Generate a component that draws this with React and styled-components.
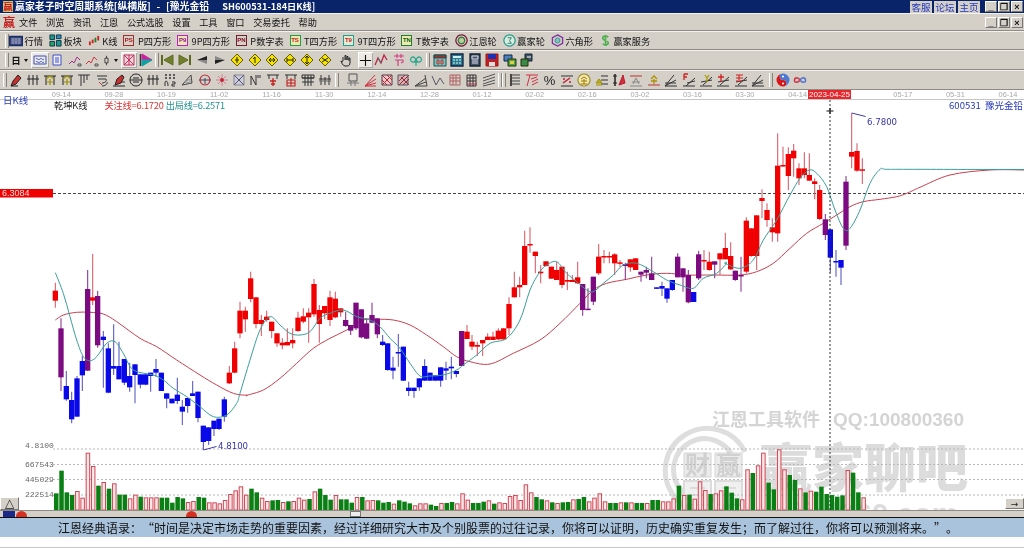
import React from "react";
import styled, { createGlobalStyle } from "styled-components";

const Global = createGlobalStyle`
  html, body { margin: 0; padding: 0; background: #fff; }
  #root { width: 1024px; height: 548px; overflow: hidden; }
`;

const FONT = `"Noto Sans CJK SC", "Liberation Sans", sans-serif`;

const Page = styled.div`
  width: 1024px; height: 548px; overflow: hidden; display: flex; flex-direction: column;
  background: #fff; font-family: ${FONT}; font-size: 9.2px; color: #111; filter: blur(0.3px);
`;
const TitleBar = styled.div`
  height: 13px; flex: none; background: #0a246a; color: #fff; display: flex; align-items: center;
  padding: 0 1px 0 3px; font-weight: 700; line-height: 13px; white-space: pre; font-size: 9.9px;
`;
const AppMark = styled.span`
  width: 10px; height: 11px; margin-right: 2px; background: #d8c070; color: #c81818; font-size: 9.5px; font-weight: 700;
  line-height: 11px; text-align: center; flex: none;
`;
const TitleText = styled.span`flex: 1; word-spacing: 3.5px;`;
const TitleCode = styled.span`margin-left: 13px; font-size: 9.2px;`;
const LinkButton = styled.span`
  width: 22px; height: 12px; margin-left: 2px; background: #d4d0c8; color: #2036c0; line-height: 12px; text-align: center;
  font-size: 9.5px; font-weight: 400; flex: none;
`;
const WinButton = styled.span`
  width: 12px; height: 11px; margin-left: ${p => p.$first ? 5 : 1}px; background: #d4d0c8; color: #111; font: 700 9px/10px "Liberation Sans", sans-serif;
  text-align: center; border: 1px solid; border-color: #fff #777 #777 #fff; box-sizing: border-box; flex: none;
`;
const Bar = styled.div`
  flex: none; height: ${p => p.$h}px; background: #d4d0c8; border-top: 1px solid #f4f2ee; border-bottom: 1px solid #8e8b84;
  box-sizing: border-box; display: flex; align-items: center; padding-left: ${p => p.$pl || 0}px; white-space: nowrap;
`;
const MenuItem = styled.span`margin-right: 8.6px;`;
const MenuMark = styled.span`width: 12px; margin: 0 4px 0 3px; color: #c81818; font-size: 12px; font-weight: 700; line-height: 12px; flex: none;`;
const Grip = styled.span`width: 2px; height: 14px; margin: 0 ${p => p.$mr ?? 2}px 0 ${p => p.$ml ?? 0}px; border-left: 1px solid #fff; border-right: 1px solid #85827b; flex: none;`;
const Spacer = styled.span`flex: ${p => p.$fix ? "0 0 1px" : "1"};`;
const Tool = styled.span`display: inline-flex; align-items: center; gap: ${p => p.$tag ? 3.5 : 1.5}px; margin-right: ${p => p.$tag ? 5.8 : 6}px; flex: none;`;
const TagIcon = styled.span`
  width: 11px; height: 11px; box-sizing: border-box; border: 1px solid ${p => p.$c}; background: ${p => p.$bg}; color: ${p => p.$t};
  font: 700 6px/9px "Liberation Sans", sans-serif; text-align: center; flex: none;
`;
const Slot = styled.span`
  width: ${p => p.$w || 17.5}px; height: 16px; display: inline-flex; align-items: center; justify-content: center; flex: none;
  background: ${p => p.$on ? "#ece9e3" : "transparent"}; box-shadow: ${p => p.$on ? "inset 1px 1px 0 #fff, inset -1px -1px 0 #aaa" : "none"};
`;
const DayLabel = styled.span`font-size: 9.5px; font-weight: 700; width: 10px; margin-left: 1px; text-align: center; flex: none;`;
const Caret = styled.span`width: 0; height: 0; margin: 0 ${p => p.$mr ?? 4}px 0 ${p => p.$ml ?? 3}px; border: 2.5px solid transparent; border-top: 3px solid #111; border-bottom: 0; flex: none;`;
const AxisRow = styled.div`
  flex: none; height: 10px; box-sizing: border-box; border-bottom: 1px solid #c6c6c6; display: flex; padding-left: 35px; background: #fff;
`;
const AxisCell = styled.span`width: 52.6px; flex: none; text-align: center; color: #a8a8a8; font: 7.4px/9px "Liberation Sans", sans-serif;`;
const ChartArea = styled.div`position: relative; flex: none; height: 417px; background: #fff;`;
const ChartSvg = styled.svg`display: block; width: 1024px; height: 410px;`;
const PeriodTag = styled.span`position: absolute; left: 3px; top: -5px; color: #2a3fb4; font-size: 9.5px; line-height: 11px;`;
const Legend = styled.div`position: absolute; left: 54px; top: 0; display: flex; line-height: 11px; font-size: 9.2px; color: #222;`;
const LegendItem = styled.span`color: ${p => p.$c}; margin-left: ${p => p.$ml}px; letter-spacing: -0.15px;`;
const Stock = styled.span`position: absolute; right: 1px; top: 0; color: #2438b8; font-size: 9.5px; line-height: 11px; white-space: pre;`;
const DateTag = styled.span`
  position: absolute; left: 808px; top: -10px; width: 43px; height: 9px; background: #e8262c; color: #fff;
  font: 8px/9px "Liberation Sans", sans-serif; text-align: center;
`;
const SmallButton = styled.span`
  position: absolute; top: ${p => p.$top}px; ${p => p.$right ? "right: 0;" : "left: 0;"} width: 19px; height: ${p => p.$right ? 11 : 13}px; box-sizing: border-box;
  background: #d4d0c8; border: 1px solid; border-color: #fff #777 #777 #fff; color: #222; font: ${p => p.$right ? 9 : 12}px/10px "DejaVu Sans", sans-serif; text-align: center;
`;
const Strip = styled.div`
  position: relative; height: 7px; background: #d4d0c8; border-top: 1px solid #8e8b84; box-sizing: border-box; display: flex; align-items: flex-start; overflow: hidden; padding-left: 3px;
`;
const StripBlue = styled.span`width: 12px; height: 6px; background: #1b2a8a; flex: none;`;
const StripDot = styled.span`width: 11px; height: 11px; border-radius: 50%; background: #d83020; margin-left: ${p => p.$ml}px; flex: none;`;
const StripThumb = styled.span`width: 11px; height: 6px; border: 1px solid #777; background: #eee; box-sizing: border-box; margin-left: ${p => p.$ml}px; flex: none;`;
const Footer = styled.div`
  flex: none; height: 20px; box-sizing: border-box; border-top: 1px solid #111; background: #a9c3dc; color: #111; font-size: 12px; line-height: 19px; padding-left: 58px; white-space: nowrap;
`;
const Quote = styled.span`display: inline-block; width: 12px; text-align: ${p => p.$a};`;
const Bottom = styled.div`flex: 1; border-bottom: 1px solid #c8c8c8; background: #fff;`;

const I = ({ a, s = 14 }) => (
  <svg width={s} height={s} viewBox="0 0 14 14" style={{ display: "block" }}>
    {a.map((p, i) => <path key={i} d={p[0]} stroke={p[1] || "none"} fill={p[2] || "none"} strokeWidth={p[3] || 1} />)}
  </svg>
);

const D = (inner, c = "#222") => [["M7 1l6 6-6 6-6-6z", "#6a5a00", "#f4e400"], [inner, c]];
const ic = {
  market: [["M0.5 2.5h13v9H.5z", "#1c2c66", "#39477e", 1.4], ["M2 5h10M2 7h10M2 9h10M4 4v6M7 4v6M10 4v6", "#b0b6c8", null, .7]],
  block: [["M1 1h5v5H1z", "#134", "#1b9a8a"], ["M8 1h5v4H8z", "#134", "#2a8cc0"], ["M1 8h5v5H1z", "#134", "#24a06a"], ["M8 7h5v6H8z", "#134", "#1b9a8a"]],
  kline: [["M2 8v4", "#d02020", null, 2], ["M5 6v4", "#d02020", null, 2], ["M8 4v5", "#208030", null, 2], ["M11 2v5", "#d02020", null, 2]],
  gann: [["M7 1a6 6 0 1 0 .01 0z", "#7a1a3a", null, 1.4], ["M7 3.5a3.5 3.5 0 1 0 .01 0z", "#3a7a3a", "#bcd0a0", 1.4]],
  win: [["M7 1a6 6 0 1 0 .01 0z", "#30a090", "#dcebe0", 1.4], ["M5 4h4l-2 3 2 3H5", "#208070"]],
  hex: [["M7 1l5.5 3v6L7 13l-5.5-3V4z", "#8030a0", null, 1.4], ["M7 4l2.5 1.5v3L7 10 4.500 8.500v-3z", "#30908a", "#80c0c0"]],
  dollar: [["M10 3.500C8 1.500 4 2 4 4.500S10 7 10 9.500 6 12.500 4 10.500M7 1v12", "#50b050", null, 1.8]],
  wave: [["M1 3h12v8H1z", "#3a4ec0"], ["M3 6c1-2 2 2 4 0s2 2 4 0M3 9c1-2 2 2 4 0s2 2 4 0", "#3a4ec0"]],
  note: [["M3 2h8v10H3z", "#4050c0", "#eef"], ["M5 5h4M5 7h4M5 9h4", "#4050c0"]],
  zigA: [["M1 11l3-3 2 2 3-6 3 3", "#a03090"], ["M10 11h3v2h-3z", "#555"]],
  zigB: [["M1 11l3-3 2 2 3-6 3 3", "#d03040"], ["M10 11h3v2h-3z", "#555"]],
  candle: [["M7 1v3M5 4h4v6H5zM7 10v3", "#222"]],
  cross: [["M2 2h10v10H2z", "#c03060", "#f2d8d8"], ["M2 2l10 10M12 2L2 12M7 2v10", "#c03060"]],
  flag: [["M1.500 1v12", "#333", null, 1.5], ["M3 1l10 6H3z", "#d020a0", "#d020a0"], ["M3 7h10L3 13z", "#10a0a0", "#10a0a0"]],
  first: [["M2 2v10", "#5c6a20", null, 2], ["M13 2v10L4 7z", "#5c6a20", "#70802c"]],
  last: [["M12 2v10", "#5c6a20", null, 2], ["M1 2v10l9-5z", "#5c6a20", "#70802c"]],
  back: [["M2 7l10-4v4z", null, "#222"], ["M2 7l10 4V7z", null, "#888"]],
  fwd: [["M12 7L2 3v4z", null, "#888"], ["M12 7L2 11V7z", null, "#222"]],
  d1: D("M7 4v6M5 7h4"), d2: D("M7 4v6M7 4L5 6"), d3: D("M4 7h6M4 7l2-2M10 7L8 5M4 7l2 2M10 7L8 9"),
  d4: D("M4 5v4M10 5v4M4 7h6"), d5: D("M7 3.500v7M5 5l2-2 2 2M5 9l2 2 2-2"), d6: D("M4 5l6 4M10 5L4 9"),
  hand: [["M4 8V4M6 7V2.500h1V7M8 7V3.500h1V7M10 8V5h1v4c0 3-1 4-3 4H6c-2 0-4-4-4-5l2 1", "#222"]],
  plus: [["M7 1v12M1 7h12", "#111", null, 1.2]],
  vee: [["M1 12l3-7 3 5 3-8 3 5", "#c02040", null, 1.3], ["M4 5l3 5", "#208080"]],
  jie: [["M2 3h10M5 1v4M9 1v4M3 7h8v2l-2 1M6 7v6", "#d04080", null, 1.2]],
  lu: [["M4 4a2.500 2.500 0 1 0 .01 0zM10 4a2.500 2.500 0 1 0 .01 0zM4 9h7M7 8v5", "#30a890", null, 1.3]],
  cal: [["M1 2h12v11H1z", "#155", "#7fc0c0"], ["M1 2h12v3H1z", "#155", "#a03030"], ["M4 7h2v4H4zM8 7h2v4H8z", "#c03030"]],
  calc: [["M1 1h12v12H1z", "#124", "#2a7a90", 1.3], ["M3 3h8v2H3z", null, "#d0f0f0"], ["M3 7h2M6 7h2M9 7h2M3 10h2M6 10h2M9 10h2", "#dff"]],
  book: [["M2 1h10v12H2z", "#123", "#456", 1.3], ["M4 3h6v3H4zM4 8h6M4 10h6", "#dde"]],
  disk: [["M1 1h12v12H1z", "#a01818", "#c02020"], ["M3 1h8v5H3z", null, "#2030b0"], ["M4 9h6v4H4z", null, "#ddd"]],
  netA: [["M1 2h8v6H1z", "#124", "#4a80c0"], ["M5 6h8v7H5z", "#230", "#50a050"], ["M7 8h4v3H7z", null, "#e0d040"]],
  netB: [["M5 1h7v7H5z", "#123", "#456"], ["M1 6h7v7H1z", "#230", "#3a8a4a"], ["M7 4h4", "#fff"]],
  pen: [["M2 13l2-5 5-6 3 3-5 6z", "#222", "#c83030"], ["M2 13h7", "#222"]],
  ticks: [["M3 2v10M7 2v10M11 2v10M1 6h12", "#222"]],
  goldT: [["M1 3h12M3 3v9M11 3v9", "#222"], ["M3 6l4-3 4 3M4 9h6M7 6v6", "#a09000", null, 1.2]],
  fork: [["M1 2h12M4 2v11M7 2v8M10 2v5", "#333"]],
  swirl: [["M2 3h10M3 6h8c1 2-1 4-4 4M7 13c3 0 6-2 5-4", "#333"], ["M4 9l3 3", "#c03030"]],
  penRed: [["M3 12l2-6 5-4 2 2-3 6z", "#222", "#c83030"], ["M1 13h12", "#222"], ["M9 9h4", "#333"]],
  circ: [["M7 1a6 6 0 1 0 .01 0z", "#222"], ["M1 7h12M4 5h6M4 9h6", "#222"]],
  n2: [["M2 2h2M6 2h2M10 2h2M2 5h2M6 5h2M10 5h2", "#333", null, 1.3], ["M2 13V9c2-2 3 0 3 4M9 9h3v2H9v2h3", "#333"]],
  tri: [["M2 12l9-10 1 8z", "#444"], ["M5 9l5-3v4z", "#999"]],
  redCirc: [["M7 2a5 5 0 1 0 .01 0z", "#c03040", null, 1.2], ["M1 7h12M7 5v6", "#445"]],
  redStar: [["M7 1v12M1 7h12M3 3l8 8M11 3l-8 8", "#d08090"], ["M5 7h4M7 5v4", "#c02030", null, 1.6]],
  boxX: [["M2 2h10v10H2z", "#889", "#ccd"], ["M2 2l10 10M12 2L2 12", "#556"]],
  nn: [["M2 12V3l5 9V2", "#333"], ["M9 2v3M11 2v3", "#333"]],
  redT: [["M1 2h12M3 2v4M11 2v4", "#333"], ["M7 5v8M4 8h6M5 11h4", "#c02020", null, 1.3]],
  redTB: [["M1 2h12M3 2v4M11 2v4", "#333"], ["M3 7h8v6H3zM3 10h8M7 5v8", "#c02020", null, 1.1]],
  gridB: [["M1 2h12v3H1zM1 5h12M4 2v11M7 2v11M10 2v11M1 9h12", "#333"]],
  gridH: [["M3 2v10M7 4v8M11 2v10M1 6h12", "#333"], ["M1 8h12", "#666"]],
  sq: [["M3 1h8v7H3z", "#555"], ["M1 10h12M5 8v5M9 8v5", "#777"]],
  fanR: [["M2 13L12 2M2 13L13 6M2 13L13 10M2 13h11", "#d03040"]],
  boxR: [["M2 2h10v10H2z", "#445", "#f0c8c8"], ["M2 12L12 2M2 2l10 10M2 7l5 5M7 2l5 5", "#c02030"]],
  boxH: [["M1 2h10v10H1z", "#556", "#d8b0b0"], ["M2 12L12 2M2 8l6-6M6 12l6-6M4 4l8 8", "#903040"]],
  ang: [["M1 13h12L11 2M1 13L12 5M1 13L12 9", "#444"]],
  vv: [["M1 3l4 9 4-7 4 6", "#556"]],
  gridR: [["M2 2h10v10H2zM5 2v10M8 2v10M2 5h10M2 8h10", "#b06060"]],
  gridD: [["M2 2h9v11H2zM5 2v11M8 2v11M2 5h9M2 8h9", "#333"], ["M2 11h10", "#c03050"]],
  lines: [["M1 5l12-4M1 8l12-4M1 11l12-4M1 13l12-3", "#555"]],
  eqL: [["M3 1v12", "#222", null, 1.6], ["M3 2h9M3 5h9M3 8h9M3 11h9", "#444"]],
  fanQ: [["M1 2h12M5 2l-3 11", "#d03040"], ["M6 6l6-2M7 9l6-3M7 12l6-3", "#d03040"]],
  redPct: [["M1 3h12M1 13h12", "#333"], ["M3 10l7-5M3 6h2M9 9h2", "#c02030", null, 1.5]],
  coin: [["M7 1a6 6 0 1 0 .01 0z", "#a09030", "#f0e8b0", 1.2], ["M4 6l3-2 3 2M4 8h6M7 6v5M4 11h6", "#a07a00"]],
  goldL: [["M6 3h7M6 7h7M6 11h7", "#333"], ["M1 10l3-4 3 4zM1 12h6", "#a09000", "#c0b020"]],
  redArrow: [["M3 1v12", "#222", null, 1.5], ["M1 3h4M1 10h4", "#222"], ["M7 12l4-10 2 8z", "#c01830", "#d03040"]],
  stA: [["M1 3h12", "#c03030"], ["M4 11l3-6 3 6M3 9h8M1 13h12", "#888"]],
  stG: [["M1 12h12", "#c03030"], ["M4 6l3-3 3 3M4 8h6M7 6v5", "#b09000", null, 1.3]],
  ang2: [["M1 13h12M1 13L10 2M1 13l11-6M1 10h11", "#333"]],
  angF: [["M1 13h12M4 13l9-8M5 10l8-2", "#333"], ["M2 1v6M2 1h4M2 4h3", "#d02020", null, 1.3]],
  angG: [["M1 13h12M4 12l9-8M2 9l11-2", "#333"], ["M6 2l2 3 2-3M8 5v4", "#b0a000", null, 1.3]],
  angT: [["M1 13h12M4 12l9-8M2 9l11-2", "#333"], ["M2 4h6M5 1v8", "#d02020", null, 1.3]],
  angS: [["M1 13h12M4 12l9-8M2 9l11-2", "#333"], ["M2 2h7M2 5h7M5 2v5M2 8h6", "#d02020", null, 1.1]],
  yy: [["M7 0.500a6.500 6.500 0 0 0 0 13a3.250 3.250 0 0 0 0-6.500a3.250 3.250 0 0 1 0-6.500z", null, "#d81818"], ["M7 .5a6.500 6.500 0 0 1 0 13a3.250 3.250 0 0 0 0-6.500a3.250 3.250 0 0 1 0-6.500z", null, "#5078d0"], ["M6.500 3h1v1h-1zM6.500 10h1v1h-1z", "#fff"]],
  inf: [["M7 7C5 4 2 4 1.500 7S5 10 7 7", "#d03040", null, 1.5], ["M7 7c2-3 5-3 5.500 0S9 10 7 7", "#5070d0", null, 1.5]],
};

const tools1a = [
  [<I a={ic.market} />, "行情"], [<I a={ic.block} s={13} />, "板块"], [<I a={ic.kline} s={13} />, "K线"],
  [<TagIcon $c="#a03030" $bg="#d8d0c8" $t="#a01818">PS</TagIcon>, "P四方形", 1],
  [<TagIcon $c="#c020c0" $bg="#ece8b0" $t="#901090">P9</TagIcon>, "9P四方形", 1],
  [<TagIcon $c="#702030" $bg="#d8d0c8" $t="#801020">PN</TagIcon>, "P数字表", 1],
  [<TagIcon $c="#20a040" $bg="#ece8b0" $t="#c02020">TS</TagIcon>, "T四方形", 1],
  [<TagIcon $c="#20a090" $bg="#e8e8d0" $t="#c02020">T9</TagIcon>, "9T四方形", 1],
  [<TagIcon $c="#208030" $bg="#ece8b0" $t="#106010">TN</TagIcon>, "T数字表", 1],
  [<I a={ic.gann} s={13} />, "江恩轮"], [<I a={ic.win} s={13} />, "赢家轮"], [<I a={ic.hex} s={13} />, "六角形"], [<I a={ic.dollar} s={13} />, "赢家服务"],
];

const row2a = ["wave", "note", "zigA", "zigB"];
const row2b = ["first", "last", "back", "fwd", "d1", "d2", "d3", "d4", "d5", "d6"];
const row2c = ["cal", "calc", "book", "disk", "netA", "netB"];
const row3a = ["pen", "ticks", "goldT", "goldT", "fork", "swirl", "penRed", "circ", "ticks", "n2", "tri", "redCirc", "redStar", "boxX", "nn", "redT", "redTB", "gridB", "gridH"];
const row3b = ["sq", "fanR", "boxR", "boxH", "ang", "vv", "gridR", "gridD", "lines"];
const row3c = ["eqL", "fanQ", "PCT", "redPct", "coin", "goldL", "redArrow", "stA", "stG", "ang2", "angF", "angG", "angT", "angS", "ang2"];
const Pct = styled.span`font: 13px "Liberation Sans", sans-serif; color: #222;`;

const seg = (ox, oy, rows) => rows.map(([px, t, b, h, l, k]) => ({ x: ox + px / 3, t: oy + t / 3, b: oy + b / 3, h: oy + h / 3, l: oy + l / 3, k }));

const candles = [
  ...seg(0, 260, [
    [166,92,122,68,143,"r"],[183,205,352,175,393,"p"],[199,378,418,333,422,"b"],[215,420,478,395,490,"b"],[231,355,470,348,470,"b"],[247,303,346,288,393,"b"],
    [263,87,332,30,332,"p"],[278,112,122,-18,135,"r"],[293,108,256,93,263,"p"],[310,230,240,213,383,"b"],[325,265,398,250,400,"b"],[341,318,326,193,345,"b"],
    [357,318,358,245,358,"b"],[373,297,368,297,375,"b"],[389,348,382,308,395,"b"],[405,313,345,313,430,"b"],[421,343,374,343,385,"b"],[437,343,374,343,376,"b"],
    [452,338,348,338,395,"b"],[468,327,338,297,350,"b"],[484,338,393,338,393,"b"],[500,400,416,400,445,"b"],[516,416,430,416,430,"b"],[532,404,423,353,432,"b"],
    [547,440,455,420,495,"b"],[563,414,438,414,458,"b"],[578,400,408,363,408,"b"],[594,395,474,395,487,"b"],[610,497,546,497,570,"b"],[626,502,543,502,555,"b"],
    [642,482,507,482,528,"b"],[657,476,507,476,510,"b"],[673,418,470,410,485,"b"],[688,338,370,318,372,"r"],
  ]),
  ...seg(230, 220, [
    [14,385,458,365,460,"r"],[30,272,340,245,355,"r"],[46,272,298,260,335,"r"],[62,175,237,155,247,"r"],[78,232,312,232,325,"r"],[94,300,312,285,348,"r"],
    [110,290,300,272,305,"r"],[125,305,333,305,355,"r"],[141,340,370,340,380,"r"],[157,368,376,355,388,"r"],[172,366,376,325,376,"r"],[188,360,370,325,385,"r"],
    [204,293,333,275,335,"r"],[220,289,305,265,310,"r"],[236,278,292,265,368,"r"],[252,192,283,177,290,"r"],[268,270,312,255,368,"r"],[284,258,280,258,298,"r"],
    [300,232,300,212,318,"r"],[316,236,292,215,295,"r"],[332,265,277,265,290,"r"],[347,300,318,275,320,"p"],[362,315,332,315,345,"p"],[378,248,325,248,330,"p"],
    [394,268,352,268,355,"p"],[410,310,356,295,356,"p"],[426,285,308,248,310,"p"],[442,295,343,295,355,"p"],[458,365,375,345,378,"b"],[473,370,450,370,452,"b"],
    [489,443,452,410,478,"b"],[505,396,400,342,440,"b"],[520,380,482,380,483,"b"],[536,503,513,485,528,"b"],[552,503,513,503,533,"b"],[568,475,502,475,512,"b"],
    [584,438,482,418,482,"b"],[600,458,482,458,482,"b"],[616,466,482,466,482,"b"],[632,442,482,442,500,"b"],[648,445,452,425,480,"b"],[664,440,445,410,478,"b"],
    [679,453,462,453,472,"b"],[695,333,438,333,438,"p"],[711,335,357,315,357,"r"],[726,365,380,345,390,"r"],[742,375,380,365,408,"r"],[758,360,370,360,408,"r"],
  ]),
  ...seg(480, 220, [
    [23,350,360,340,360,"r"],[39,350,360,335,360,"r"],[55,332,358,325,360,"r"],[71,325,358,325,360,"r"],[87,252,325,232,345,"r"],[103,202,232,155,232,"r"],
    [119,195,202,170,232,"r"],[134,78,195,32,195,"r"],[150,72,76,22,98,"r"],[166,95,108,95,160,"r"],[182,155,160,135,190,"r"],[198,124,138,124,140,"r"],
    [214,140,176,140,176,"r"],[230,150,180,125,180,"r"],[246,140,195,140,205,"r"],[262,180,185,155,210,"r"],[277,180,186,165,186,"r"],[293,172,190,125,192,"r"],
    [308,192,270,192,287,"p"],[324,266,268,205,268,"p"],[340,170,245,170,255,"p"],[356,110,160,72,165,"r"],[372,108,112,90,130,"r"],[388,108,112,95,130,"r"],
    [404,103,130,100,165,"r"],[420,127,131,120,140,"r"],[436,132,138,128,180,"p"],[451,118,142,118,155,"r"],[467,115,150,115,150,"r"],[483,155,164,155,185,"p"],
    [499,150,158,140,175,"p"],[515,160,180,110,180,"p"],[530,202,206,202,206,"b"],[546,198,206,185,228,"b"],[561,205,236,205,248,"b"],[577,180,210,180,212,"b"],
    [593,110,172,100,172,"p"],[609,145,172,145,215,"p"],[625,165,247,150,250,"p"],[641,216,246,216,246,"b"],[656,103,175,92,180,"p"],[672,120,124,90,150,"r"],
    [688,125,150,95,152,"r"],[704,124,134,124,175,"p"],[720,100,118,100,165,"r"],[736,84,118,38,118,"r"],
  ]),
  ...seg(720, 110, [
    [32,438,478,397,480,"r"],[46,482,510,482,512,"p"],[63,495,498,440,545,"p"],[79,332,485,322,490,"r"],[94,355,438,355,440,"r"],[110,316,438,316,480,"r"],
    [126,264,273,238,325,"r"],[141,300,330,280,350,"r"],[157,352,367,325,395,"r"],[173,167,370,70,395,"r"],[189,165,168,110,170,"r"],[205,132,198,112,240,"r"],
    [221,122,145,102,200,"r"],[237,175,205,160,225,"r"],[253,175,195,127,205,"r"],[268,195,212,130,212,"r"],[284,214,222,205,268,"r"],[299,240,327,225,330,"r"],
    [316,328,375,312,390,"p"],[331,358,443,358,488,"b"],[348,453,456,420,500,"b"],[363,450,473,450,525,"b"],[378,215,407,198,420,"p"],[395,126,140,10,175,"r"],
    [411,123,182,100,185,"r"],[427,178,180,145,222,"r"],
  ]),
];

const pts = (ox, oy, arr) => arr.map(([a, b]) => [ox + a / 3, oy + b / 3]);
const smooth = p => {
  let d = `M${p[0][0]} ${p[0][1]}`;
  for (let i = 0; i < p.length - 1; i++) {
    const a = p[i - 1] || p[i], b = p[i], c = p[i + 1], e = p[i + 2] || c;
    d += `C${(b[0] + (c[0] - a[0]) / 6).toFixed(1)} ${(b[1] + (c[1] - a[1]) / 6).toFixed(1)} ${(c[0] - (e[0] - b[0]) / 6).toFixed(1)} ${(c[1] - (e[1] - b[1]) / 6).toFixed(1)} ${c[0].toFixed(1)} ${c[1].toFixed(1)}`;
  }
  return d;
};

const slow = smooth([
  ...pts(0, 260, [[166,180],[190,165],[230,157],[270,157],[310,162],[350,185],[420,235],[470,260],[530,300],[600,345],[650,375],[700,400],[740,406]]),
  ...pts(230, 220, [[50,526],[100,510],[150,475],[200,430],[250,385],[300,355],[350,330],[400,300],[440,298],[490,300],[540,315],[590,345],[640,380],[680,410],[720,425],[780,432]]),
  ...pts(480, 220, [[100,400],[180,360],[240,310],[300,250],[340,210],[380,190],[440,178],[500,165],[560,160],[620,165],[700,165]]),
  ...pts(720, 110, [[60,495],[110,485],[160,460],[210,415],[260,370],[310,340],[350,315],[390,290],[430,275],[480,268],[530,260],[560,250],[600,232]]),
  [950,175],[990,170],[1024,170],
]);
const fast = smooth([
  ...pts(0, 260, [[166,38],[190,100],[210,170],[230,240],[250,290],[270,302],[290,290],[320,250],[345,245],[370,280],[400,330],[460,345],[490,360],[520,385],[560,410],[600,440],[640,470],[680,465],[710,430]]),
  ...pts(230, 220, [[30,520],[60,420],[90,330],[120,290],[150,315],[180,340],[210,345],[240,335],[270,295],[300,280],[340,270],[380,290],[420,300],[450,320],[480,355],[510,385],[540,430],[570,468],[600,468],[640,465],[680,450],[700,435],[740,405],[780,370]]),
  ...pts(480, 220, [[80,355],[120,300],[150,210],[180,155],[200,135],[230,125],[260,160],[290,185],[320,210],[340,215],[370,190],[400,165],[430,135],[470,130],[520,155],[560,180],[600,195],[640,205],[670,175],[710,160],[740,130]]),
  ...pts(720, 110, [[15,460],[60,475],[100,450],[130,390],[170,330],[210,255],[240,205],[268,180],[290,190],[320,230],[345,300],[370,355],[390,355],[420,300],[450,220],[480,178],[500,178],[600,178]]),
  [1024,169.5],
]);

const volA = "g190 g122 g187 g195 r183 r203 r68 r108 g167 r156 g176 r160 g194 g194 r205 r194 g200 r202 r202 r202 g203 g203 g218 g201 g205 r216 r213 g201 g203 r217 r217 r220 r210 r192 r181 r169 r194 g176 g187 r203 r213 g211 g210 r216 g214 r213 r203 r209 g207 r184 g176 g195 g209 r195 g208".split(" ");
const volB = "g208 g218 r201 g201 r211 r210 g211 g218 g216 r221 g211 g215 g220 r226 r220 r220 g224 g228 r219 g219 g216 r220 r190 r209 g219 g219 g215 r211 g221 r217 r219 r198 r195 r210 r163 r187 g201 g208 r211 g217 r219 g217 g216 r208 g207 g201 r214 r203 r190 r214 g219 g219 r217 g217 r217 g219 g219 r219 g210 g210 r214 r214 r205 g167".split(" ");
const volC = "r285 g284 r296 r244 r270 g282 r280 r271 g259 g278 g295 r298 r208 g219 r196 r158 g248 g268 r148 r208 g225 g240 r265 g277 r272 g275 g260 g282 g285 g290 g286 r210 g218 g277 r292".split(" ");
const bars = [
  ...volA.map(v => [v[0], 430 + +v.slice(1) / 3]),
  ...volB.map(v => [v[0], 430 + +v.slice(1) / 3]),
  ...volC.map(v => [v[0], 400 + +v.slice(1) / 3]),
];

const COL = { r: "#f00000", b: "#0808e8", p: "#7c0a80" };
const WICK = { r: "#d8606c", b: "#5c5cc4", p: "#8a3c90" };

const Chart = () => (
  <ChartSvg viewBox="0 100 1024 410">
    <g fontFamily={FONT}>
      <text x="712" y="426" fontSize="18" fontWeight="700" fill="#d4d4d4">江恩工具软件</text>
      <text x="833" y="426" fontSize="19" fontWeight="700" fontFamily="Liberation Sans" fill="#d4d4d4">QQ:100800360</text>
      <text x="760" y="487" fontSize="52" fontWeight="900" fill="#dcdcdc">赢家聊吧</text>
      <text x="795" y="524" fontSize="30" fontFamily="Liberation Sans" fontWeight="700" fill="#dcdcdc">jief360.com</text>
      <path d="M745 452a42 42 0 1 0-10 50M734 460a31 31 0 1 0-6 30" fill="none" stroke="#dedede" strokeWidth="5" />
      <path d="M684 453h27v24h-27zM715 453h27v24h-27z" fill="#ececec" stroke="#d4d4d4" />
      <text x="685" y="474" fontSize="25" fontWeight="700" fill="#d0d0d0">财</text>
      <text x="716" y="474" fontSize="25" fontWeight="700" fill="#d0d0d0">赢</text>
      <path d="M684 481h27v24h-27zM715 481h27v24h-27zM690 488h15M690 495h15M722 488h14M722 495h14" fill="#f0f0f0" stroke="#dcdcdc" strokeWidth="2" />
    </g>
    {[449, 464.500, 479.500, 495].map(y => <line key={y} x1="53" x2="1024" y1={y} y2={y} stroke="#b8b8b8" strokeDasharray="2 2" />)}
    <g fontFamily="Liberation Mono, monospace" fontSize="8" fill="#666">
      <text x="25" y="447.500">4.8100</text>
      <text x="25" y="467">667543</text>
      <text x="25" y="482">445029</text>
      <text x="25" y="497">222514</text>
    </g>
    <line x1="53" x2="1024" y1="193.500" y2="193.500" stroke="#444" strokeDasharray="3 2" />
    <rect x="0" y="189" width="53" height="8.500" fill="#f00000" />
    <text x="2" y="196.300" fontFamily="Liberation Sans, sans-serif" fontSize="9" fill="#fbdcdc">6.3084</text>
    {bars.map(([k, y], i) => {
      const x = 54 + i * 5.277;
      return k === "g"
        ? <rect key={i} x={x} y={y} width="4.500" height={510 - y} fill="#0a7f14" />
        : <rect key={i} x={x + .5} y={y + .5} width="3.500" height={509.5 - y} fill="#fde8e8" stroke="#d04858" />;
    })}
    <path d={slow} fill="none" stroke="#c8404e" strokeWidth="1" />
    {candles.map((c, i) => (
      <g key={i}>
        <line x1={c.x} x2={c.x} y1={c.h} y2={c.l} stroke={WICK[c.k]} strokeWidth="1.100" />
        <rect x={c.x - 2.650} y={c.t} width="5.300" height={Math.max(c.b - c.t, 1.500)} fill={COL[c.k]} />
      </g>
    ))}
    <path d={fast} fill="none" stroke="#3a9e9a" strokeWidth="1" />
    <line x1="830" x2="830" y1="100" y2="510" stroke="#333" strokeDasharray="2 2" />
    <path d="M826.500 111h7M830 108v6" stroke="#111" strokeWidth="1.200" />
    <path d="M851.700 113l14 3.500M203.500 450l13-3.500" stroke="#3c3ca8" fill="none" />
    <path d="M203.500 443v7" stroke="#5c5cc4" fill="none" />
    <g fontFamily="DejaVu Sans, sans-serif" fontSize="8.600" fill="#3434a8">
      <text x="867" y="125">6.7800</text>
      <text x="218" y="448.500">4.8100</text>
    </g>
  </ChartSvg>
);

export default function App() {
  return (
    <Page lang="zh-CN">
      <Global />
      <TitleBar>
        <AppMark>赢</AppMark>
        <TitleText>赢家老子时空周期系统[纵横版] - [豫光金铅<TitleCode>SH600531-184日K线]</TitleCode></TitleText>
        <LinkButton>客服</LinkButton><LinkButton>论坛</LinkButton><LinkButton>主页</LinkButton>
        <WinButton $first>_</WinButton><WinButton>❐</WinButton><WinButton>×</WinButton>
      </TitleBar>
      <Bar $h={18}>
        <MenuMark>赢</MenuMark>
        {["文件", "浏览", "资讯", "江恩", "公式选股", "设置", "工具", "窗口", "交易委托", "帮助"].map(m => <MenuItem key={m}>{m}</MenuItem>)}
        <Spacer />
        <WinButton>_</WinButton><WinButton>❐</WinButton><WinButton>×</WinButton><Spacer $fix />
      </Bar>
      <Bar $h={19} $pl={5}>
        <Grip $mr={0} />
        {tools1a.map(([icon, label, tag]) => <Tool key={label} $tag={tag}>{icon}<span>{label}</span></Tool>)}
      </Bar>
      <Bar $h={20} $pl={5}>
        <Grip $mr={1} />
        <DayLabel>日</DayLabel><Caret $ml={3} $mr={3} />
        {row2a.map((n, i) => <Slot key={n} $on={i === 0}><I a={ic[n]} /></Slot>)}
        <Slot $w={11}><I a={ic.candle} s={13} /></Slot><Caret $ml={2} $mr={3} />
        <Slot $w={16} $on><I a={ic.cross} /></Slot>
        <Slot><I a={ic.flag} /></Slot>
        <Grip $ml={0} $mr={0} />
        {row2b.map(n => <Slot key={n}><I a={ic[n]} /></Slot>)}
        <Slot $w={24}><I a={ic.hand} /></Slot>
        <Slot $w={15} $on><I a={ic.plus} s={13} /></Slot>
        <Slot><I a={ic.vee} /></Slot><Slot><I a={ic.jie} /></Slot><Slot><I a={ic.lu} /></Slot>
        <Grip $ml={1} $mr={1} />
        {row2c.map(n => <Slot key={n}><I a={ic[n]} /></Slot>)}
      </Bar>
      <Bar $h={20} $pl={3}>
        <Grip $mr={0} />
        {row3a.map((n, i) => <Slot key={i} $w={17.2}><I a={ic[n]} /></Slot>)}
        <Grip $ml={1} $mr={5.5} />
        {row3b.map((n, i) => <Slot key={i} $w={17}><I a={ic[n]} /></Slot>)}
        <Grip $ml={1} $mr={0} /><Grip $ml={0} $mr={0} />
        {row3c.map((n, i) => <Slot key={i} $w={17.4}>{n === "PCT" ? <Pct>%</Pct> : <I a={ic[n]} />}</Slot>)}
        <Grip $ml={2} $mr={1.5} />
        <Slot $w={17}><I a={ic.yy} /></Slot><Slot $w={17}><I a={ic.inf} /></Slot>
      </Bar>
      <AxisRow>
        {["09-14","09-28","10-19","11-02","11-16","11-30","12-14","12-28","01-12","02-02","02-16","03-02","03-16","03-30","04-14","","05-17","05-31","06-14"].map((d, i) => <AxisCell key={i}>{d}</AxisCell>)}
      </AxisRow>
      <ChartArea>
        <Chart />
        <PeriodTag>日K线</PeriodTag>
        <Legend>
          <span>乾坤K线</span>
          <LegendItem $c="#e03030" $ml={17}>关注线=6.1720</LegendItem>
          <LegendItem $c="#209090" $ml={2}>出局线=6.2571</LegendItem>
        </Legend>
        <Stock>600531  豫光金铅</Stock>
        <DateTag>2023-04-25</DateTag>
        <SmallButton $top={397}>△</SmallButton>
        <SmallButton $top={398} $right>→</SmallButton>
        <Strip>
          <StripBlue /><StripDot $ml={1} /><StripDot $ml={159} /><StripThumb $ml={153} />
        </Strip>
      </ChartArea>
      <Footer>江恩经典语录：<Quote $a="right">“</Quote>时间是决定市场走势的重要因素，经过详细研究大市及个别股票的过往记录，你将可以证明，历史确实重复发生；而了解过往，你将可以预测将来。<Quote $a="left">”</Quote>。</Footer>
      <Bottom />
    </Page>
  );
}
